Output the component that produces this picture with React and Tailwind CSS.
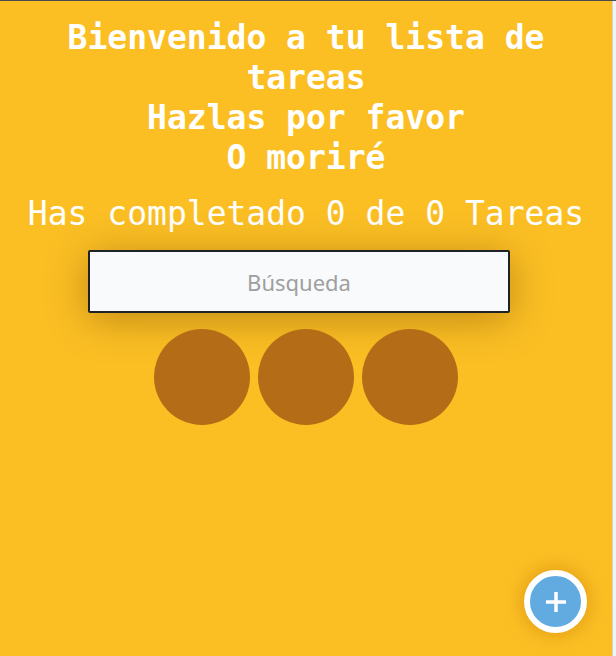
import React, { useState } from "react";

const App = () => {
  const [search, setSearch] = useState("");
  const completed = 0;
  const total = 0;

  return (
    <div className="flex h-[656px] w-full overflow-hidden border-t border-[#4b4b4b]">
      {/* Contenido principal */}
      <div className="relative flex h-full w-[612px] flex-col items-center bg-[#fbbf24] font-['DejaVu_Sans_Mono',monospace] text-white">
        <h1 className="mt-[17px] text-center text-[33px] font-bold leading-10">
          Bienvenido a tu lista de
          <br />
          tareas
          <br />
          Hazlas por favor
          <br />
          O moriré
        </h1>

        <h2 className="mt-[16px] text-center text-[33px] font-normal leading-10">
          Has completado {completed} de {total} Tareas
        </h2>

        {/* Buscador */}
        <input
          type="text"
          placeholder="Búsqueda"
          value={search}
          onChange={(e) => setSearch(e.target.value)}
          className="mr-[14px] mt-[16px] h-[63px] w-[422px] rounded-[2px] border-2 border-[#1f2328] bg-[#f8fafc] text-center font-['Noto_Sans',sans-serif] text-[22px] text-[#555] shadow-[0_6px_40px_rgba(120,70,0,0.45)] outline-none placeholder:text-[#9f9f9f]"
        />

        {/* Cargando */}
        <div className="mt-[16px] flex gap-2">
          <div className="h-24 w-24 rounded-full bg-[#b56c16]" />
          <div className="h-24 w-24 rounded-full bg-[#b56c16]" />
          <div className="h-24 w-24 rounded-full bg-[#b56c16]" />
        </div>

        {/* Boton crear */}
        <button className="absolute bottom-[23px] right-[25px] flex h-[63px] w-[63px] items-center justify-center rounded-full border-[6px] border-white bg-[#61abe1] shadow-[0_0_20px_rgba(200,120,0,0.6)]">
          <svg width="22" height="22" viewBox="0 0 22 22">
            <path d="M11 1v20M1 11h20" stroke="white" strokeWidth="3.5" />
          </svg>
        </button>
      </div>

      {/* Borde derecho */}
      <div className="h-full w-[4px] border-l border-[#d4d4d8] bg-[#f3f3f5]" />
    </div>
  );
};

export default App;
